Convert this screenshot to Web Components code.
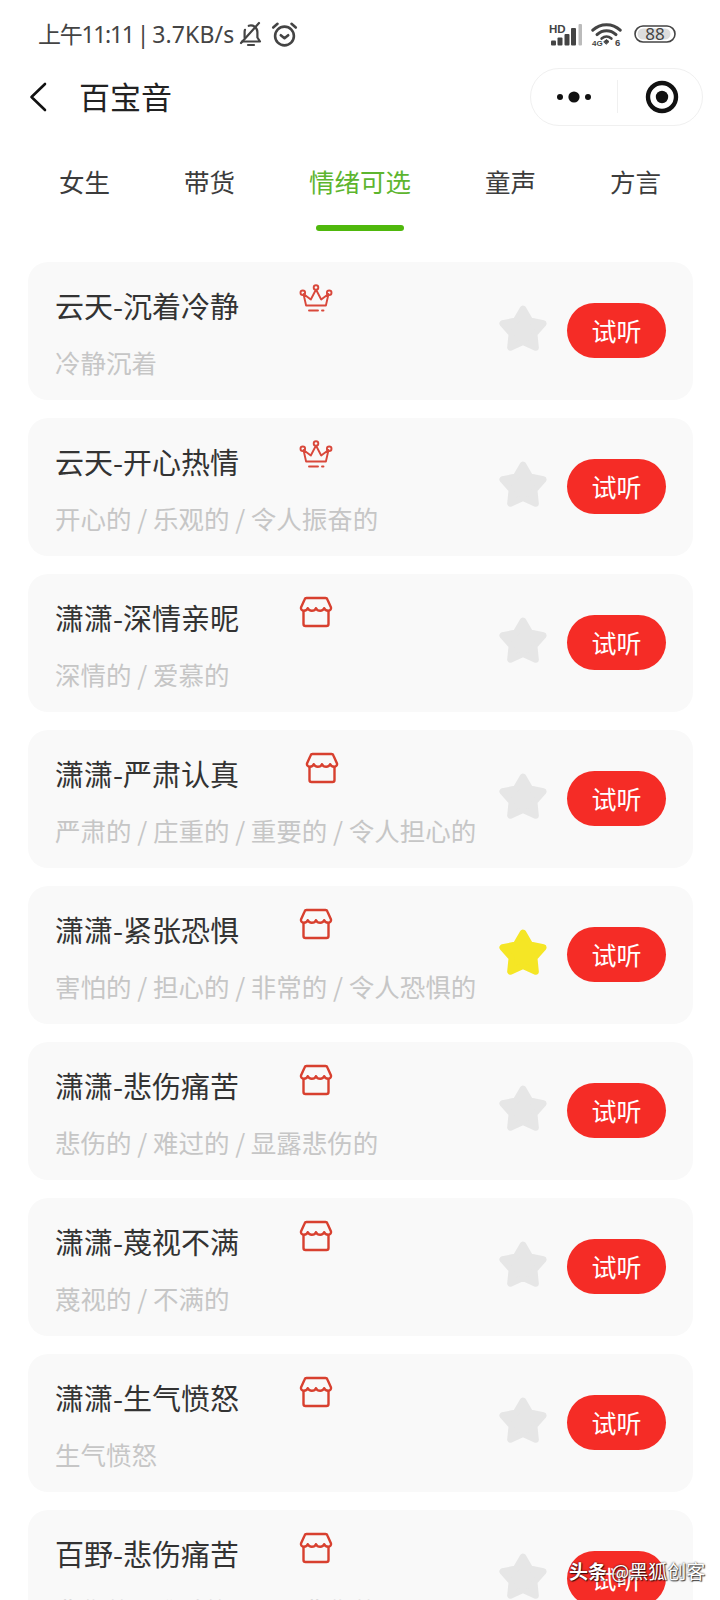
<!DOCTYPE html>
<html lang="zh">
<head>
<meta charset="utf-8">
<title>百宝音</title>
<style>
  html, body { margin: 0; padding: 0; background: #fff; }
  body {
    width: 720px;
    height: 1600px;
    overflow: hidden;
    position: relative;
    font-family: "Noto Sans CJK SC", "Noto Sans", sans-serif;
  }
</style>
</head>
<body>
<status-bar></status-bar>
<nav-bar>百宝音</nav-bar>
<tab-strip></tab-strip>
<voice-list>
  <voice-card badge="crown"><span>云天-沉着冷静</span><span slot="sub">冷静沉着</span></voice-card>
  <voice-card badge="crown"><span>云天-开心热情</span><span slot="sub">开心的 / 乐观的 / 令人振奋的</span></voice-card>
  <voice-card badge="store"><span>潇潇-深情亲昵</span><span slot="sub">深情的 / 爱慕的</span></voice-card>
  <voice-card badge="store" shift="6"><span>潇潇-严肃认真</span><span slot="sub">严肃的 / 庄重的 / 重要的 / 令人担心的</span></voice-card>
  <voice-card badge="store" starred><span>潇潇-紧张恐惧</span><span slot="sub">害怕的 / 担心的 / 非常的 / 令人恐惧的</span></voice-card>
  <voice-card badge="store"><span>潇潇-悲伤痛苦</span><span slot="sub">悲伤的 / 难过的 / 显露悲伤的</span></voice-card>
  <voice-card badge="store"><span>潇潇-蔑视不满</span><span slot="sub">蔑视的 / 不满的</span></voice-card>
  <voice-card badge="store"><span>潇潇-生气愤怒</span><span slot="sub">生气愤怒</span></voice-card>
  <voice-card badge="store"><span>百野-悲伤痛苦</span><span slot="sub">悲伤的 / 难过的 / 显露悲伤的</span></voice-card>
</voice-list>
<water-mark></water-mark>

<script>
class StatusBar extends HTMLElement {
  constructor() {
    super();
    this.attachShadow({ mode: 'open' });
    this.shadowRoot.innerHTML = `
      <style>
        :host {
          display: flex;
          align-items: center;
          justify-content: space-between;
          height: 68px;
          padding: 0 44px 0 38px;
          box-sizing: border-box;
          color: #444;
          font: 23px/1 "Noto Sans", "Noto Sans CJK SC", sans-serif;
        }
        .left, .right { display: flex; align-items: center; }
        .text { word-spacing: -3px; white-space: nowrap; }
        .clock { letter-spacing: -1.3px; }
        .speed { letter-spacing: 0.1px; }
        .left svg { margin-left: 4px; }
        .right svg { display: block; }
        .batt { position: relative; width: 42px; height: 18px; margin-left: 11px; }
        .batt b {
          position: absolute;
          inset: 0;
          text-align: center;
          font: 400 17px/18px "Noto Sans", sans-serif;
          color: #444;
        }
      </style>
      <div class="left">
        <span class="text"><span class="clock">上午11:11</span> | <span class="speed">3.7KB/s</span></span>
        <svg width="26" height="26" viewBox="0 0 26 26" fill="none" stroke="#444" stroke-width="2.2" stroke-linecap="round" stroke-linejoin="round">
          <path d="M4 20.5h18l-2.6-4V11a6.6 6.6 0 0 0-8.6-6.2"/>
          <path d="M6.6 16.5V11c0-.8.1-1.500.4-2.200"/>
          <path d="M3 22L21 2"/>
          <path d="M10 24h6"/>
        </svg>
        <svg style="margin-left:7px" width="27" height="27" viewBox="0 0 27 27" fill="none" stroke="#444" stroke-width="2.600" stroke-linecap="round" stroke-linejoin="round">
          <circle cx="13.500" cy="15" r="9.400"/>
          <path d="M9.800 14.200l3.700 3 3.700-3"/>
          <path d="M2.200 6.500L6.500 2.800M24.800 6.500L20.500 2.800"/>
        </svg>
      </div>
      <div class="right">
        <svg width="33" height="23" viewBox="0 0 33 23">
          <text x="0" y="10" font-family="Liberation Sans, sans-serif" font-weight="700" font-size="11.5" fill="#444">HD</text>
          <g fill="#444">
            <rect x="2" y="17.500" width="5" height="5" rx="1"/>
            <rect x="8.500" y="14.500" width="5" height="8" rx="1"/>
            <rect x="15.500" y="11" width="5" height="11.500" rx="1"/>
            <rect x="22" y="5" width="5" height="17.500" rx="1"/>
          </g>
          <rect x="29.500" y="1" width="3.500" height="21.500" rx="1" fill="#bbb"/>
        </svg>
        <svg style="margin-left:9px" width="32" height="24" viewBox="0 0 32 24" fill="none" stroke="#444" stroke-linecap="round">
          <path d="M1.800 8.200C9.500 .8 21.500 .8 29.200 8.200" stroke-width="3"/>
          <path d="M6 12.600c5.600-5.200 13.400-5.200 19 0" stroke-width="3"/>
          <path d="M10.600 16.600c3-2.600 6.800-2.600 9.800 0" stroke-width="2.600"/>
          <path d="M13 19.600l2.500-2 2.500 2-2.500 2.400z" fill="#444" stroke-width="1"/>
          <text x="24" y="23.500" font-family="Liberation Sans, sans-serif" font-weight="700" font-size="9.500" fill="#444" stroke="none">6</text>
          <text x="1" y="23.500" font-family="Liberation Sans, sans-serif" font-weight="700" font-size="8" fill="#444" stroke="none">4G</text>
        </svg>
        <div class="batt">
          <svg width="42" height="18" viewBox="0 0 42 18">
            <rect x="1" y="1" width="40" height="16" rx="8" fill="none" stroke="#444" stroke-width="1.600"/>
            <rect x="3.500" y="3.500" width="33" height="11" rx="5.500" fill="#ddd"/>
          </svg>
          <b>88</b>
        </div>
      </div>
    `;
  }
}

class NavBar extends HTMLElement {
  constructor() {
    super();
    this.attachShadow({ mode: 'open' });
    this.shadowRoot.innerHTML = `
      <style>
        :host {
          display: flex;
          align-items: center;
          height: 57px;
          padding: 0 17px 0 29px;
          box-sizing: border-box;
        }
        .back { display: block; flex: none; }
        .title {
          margin: -2px 0 0 32px;
          flex: 1;
          font: 400 31px/1 "Noto Sans CJK SC", sans-serif;
          color: #222;
        }
        .capsule {
          flex: none;
          display: flex;
          align-items: center;
          box-sizing: border-box;
          width: 173px;
          height: 58px;
          border: 1px solid #f0f0f0;
          border-radius: 29px;
        }
        .dots { width: 86px; display: flex; justify-content: center; }
        .sep { width: 1px; height: 33px; background: #f0f0f0; }
        .target { flex: 1; display: flex; justify-content: center; padding-left: 4px; }
      </style>
      <svg class="back" width="18" height="30" viewBox="0 0 18 30" fill="none" stroke="#111" stroke-width="2.600" stroke-linecap="round" stroke-linejoin="round">
        <path d="M16 2L2.500 15 16 28"/>
      </svg>
      <div class="title"><slot></slot></div>
      <div class="capsule">
        <div class="dots">
          <svg width="36" height="14" viewBox="0 0 36 14" fill="#111">
            <circle cx="4" cy="7" r="3"/><circle cx="18" cy="7" r="5.600"/><circle cx="32" cy="7" r="3"/>
          </svg>
        </div>
        <div class="sep"></div>
        <div class="target">
          <svg width="34" height="34" viewBox="0 0 34 34">
            <circle cx="17" cy="17" r="14" fill="none" stroke="#111" stroke-width="4.400"/>
            <circle cx="17" cy="17" r="6.200" fill="#111"/>
          </svg>
        </div>
      </div>
    `;
  }
}

class TabStrip extends HTMLElement {
  constructor() {
    super();
    this.attachShadow({ mode: 'open' });
    const tabs = ['女生', '带货', '情绪可选', '童声', '方言'];
    this.shadowRoot.innerHTML = `
      <style>
        :host {
          display: flex;
          justify-content: center;
          gap: 74px;
          height: 131px;
          padding-top: 38px;
          box-sizing: border-box;
          font: 400 25.500px/36px "Noto Sans CJK SC", sans-serif;
          color: #3c3c3c;
        }
        .tab { position: relative; white-space: nowrap; height: 36px; }
        .on { color: #5db52e; }
        .on::after {
          content: "";
          position: absolute;
          left: 7px;
          right: 7px;
          top: 62px;
          height: 6px;
          border-radius: 3px;
          background: #4fb80c;
        }
      </style>
      ${tabs.map((t, i) => `<div class="tab${i === 2 ? ' on' : ''}">${t}</div>`).join('')}
    `;
  }
}

class VoiceList extends HTMLElement {
  constructor() {
    super();
    this.attachShadow({ mode: 'open' });
    this.shadowRoot.innerHTML = `
      <style>
        :host {
          display: flex;
          flex-direction: column;
          gap: 18px;
          padding: 6px 27px 0 28px;
        }
      </style>
      <slot></slot>
    `;
  }
}

const BADGES = {
  crown: `<svg width="34" height="30" viewBox="0 0 34 30" fill="none" stroke="#d9483b" stroke-width="1.900" stroke-linecap="round" stroke-linejoin="round">
      <path d="M4.500 10l2.600 11.500h19.800L29.500 10l-7.300 5.500L17 5.500l-5.200 10z"/>
      <circle cx="17" cy="3.600" r="2.300"/><circle cx="3.800" cy="8.800" r="2.300"/><circle cx="30.200" cy="8.800" r="2.300"/>
      <path d="M10 26.500h9M23 26.500h1.500"/>
    </svg>`,
  store: `<svg width="34" height="32" viewBox="0 0 34 32" fill="none" stroke="#d8402f" stroke-width="2.400" stroke-linecap="round" stroke-linejoin="round">
      <path d="M7.500 2h19a2 2 0 0 1 1.900 1.400L32 11.500c.4 1.700-1 3.300-2.800 3.300-2.300 0-3.500-1-4-2.600-.6 1.600-2 2.600-4 2.600s-3.500-1-4.200-2.600c-.7 1.600-2.200 2.600-4.200 2.600s-3.400-1-4-2.600c-.5 1.600-1.700 2.600-4 2.600-1.800 0-3.200-1.600-2.800-3.300L5.600 3.400A2 2 0 0 1 7.500 2z"/>
      <path d="M4.500 15v13a2 2 0 0 0 2 2h21a2 2 0 0 0 2-2V15"/>
    </svg>`,
};

class VoiceCard extends HTMLElement {
  constructor() {
    super();
    this.attachShadow({ mode: 'open' });
  }

  connectedCallback() {
    const shift = 60 + Number(this.getAttribute('shift') || 0);
    const star = this.hasAttribute('starred') ? '#f5e625' : '#e6e6e6';
    this.shadowRoot.innerHTML = `
      <style>
        :host {
          display: flex;
          align-items: center;
          box-sizing: border-box;
          height: 138px;
          padding: 0 27px;
          background: #f9f9f9;
          border-radius: 20px;
        }
        .text { flex: 1; min-width: 0; align-self: flex-start; }
        .head { display: flex; height: 62px; }
        .name {
          font: 400 29px/44px "Noto Sans CJK SC", sans-serif;
          color: #333;
          margin-top: 21px;
          white-space: nowrap;
        }
        .badge { margin: 22px 0 0 ${shift}px; height: 32px; }
        .badge svg { display: block; }
        .sub {
          margin-top: 20px;
          font: 400 25.500px/36px "Noto Sans CJK SC", sans-serif;
          color: #c6c6c6;
          white-space: nowrap;
        }
        .star { display: block; flex: none; margin: -7px 20px 0 0; }
        .play {
          flex: none;
          width: 99px;
          height: 55px;
          margin-top: -1px;
          border-radius: 28px;
          background: #f52c26;
          color: #fff;
          text-align: center;
          font: 400 25px/55px "Noto Sans CJK SC", sans-serif;
        }
      </style>
      <div class="text">
        <div class="head">
          <div class="name"><slot></slot></div>
          <div class="badge">${BADGES[this.getAttribute('badge')] || ''}</div>
        </div>
        <div class="sub"><slot name="sub"></slot></div>
      </div>
      <svg class="star" width="48" height="46" viewBox="2.500 2.500 44 43" fill="${star}" stroke="${star}" stroke-width="6" stroke-linejoin="round">
        <polygon points="24.500,6 31,17.100 43.500,19.800 35,29.400 36.300,42.200 24.500,37 12.700,42.200 14,29.400 5.500,19.800 18,17.100"/>
      </svg>
      <div class="play">试听</div>
    `;
  }
}

class WaterMark extends HTMLElement {
  constructor() {
    super();
    this.attachShadow({ mode: 'open' });
    this.shadowRoot.innerHTML = `
      <style>
        :host {
          position: absolute;
          left: 569px;
          top: 1556px;
          font: 400 19px/30px "Noto Sans CJK SC", sans-serif;
          color: #fff;
          white-space: nowrap;
          text-shadow: 0 0 2px rgba(0,0,0,.8), 1px 1px 1px rgba(0,0,0,.7);
        }
        b { font-weight: 700; }
      </style>
      <b>头条</b> @黑狐创客
    `;
  }
}

customElements.define('status-bar', StatusBar);
customElements.define('nav-bar', NavBar);
customElements.define('tab-strip', TabStrip);
customElements.define('voice-list', VoiceList);
customElements.define('voice-card', VoiceCard);
customElements.define('water-mark', WaterMark);
</script>
</body>
</html>
